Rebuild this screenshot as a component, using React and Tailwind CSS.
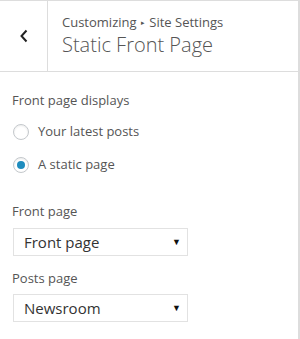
import React from "react";

const SelectBox = ({ value }) => (
  <div className="w-[175px] h-[28px] border border-[#e2e2e2] bg-white flex items-center justify-between pl-[10px] pr-[6px]">
    <span className="text-[15px] text-[#333]">{value}</span>
    <span className="text-[9px] text-[#111]">▼</span>
  </div>
);

const Radio = ({ checked, label }) => (
  <label className="flex items-center gap-[9px] h-[20px]">
    <span className="w-[16px] h-[16px] rounded-full border border-[#c4c8cc] bg-white flex items-center justify-center shadow-[inset_0_1px_2px_rgba(0,0,0,0.08)]">
      {checked && <span className="w-[8px] h-[8px] rounded-full bg-[#1e8cbe]"></span>}
    </span>
    <span className="text-[13px] text-[#555]">{label}</span>
  </label>
);

export default function App() {
  return (
    <div className="w-[300px] h-[339px] bg-white border-r-2 border-[#dddddd] font-['Open_Sans',sans-serif] overflow-hidden">
      {/* header */}
      <div className="flex h-[72px] border-t border-b border-[#dddddd]">
        <div className="w-[48px] border-r border-[#dddddd] flex items-center justify-center">
          <svg width="10" height="14" viewBox="0 0 10 14">
            <path d="M7.5 1.5 L2.5 7 L7.5 12.5" fill="none" stroke="#222" strokeWidth="2" />
          </svg>
        </div>
        <div className="flex flex-col pl-[14px] pt-[12px]">
          <div className="text-[13px] leading-[18px] text-[#555]">
            Customizing <span className="text-[7px] align-[2px] mx-[1px]">▸</span> Site Settings
          </div>
          <div className="text-[20px] leading-[26px] font-light text-[#555]">Static Front Page</div>
        </div>
      </div>

      {/* body */}
      <div className="flex flex-col pl-[12px] pt-[19px]">
        <div className="text-[13px] leading-[18px] text-[#555]">Front page displays</div>
        <div className="flex flex-col gap-[13px] mt-[13px] pl-[1px]">
          <Radio label="Your latest posts" />
          <Radio checked label="A static page" />
        </div>

        <div className="text-[13px] leading-[18px] text-[#555] mt-[27px]">Front page</div>
        <div className="mt-[8px] pl-[1px]">
          <SelectBox value="Front page" />
        </div>

        <div className="text-[13px] leading-[18px] text-[#555] mt-[13px]">Posts page</div>
        <div className="mt-[7px] pl-[1px]">
          <SelectBox value="Newsroom" />
        </div>
      </div>
    </div>
  );
}
